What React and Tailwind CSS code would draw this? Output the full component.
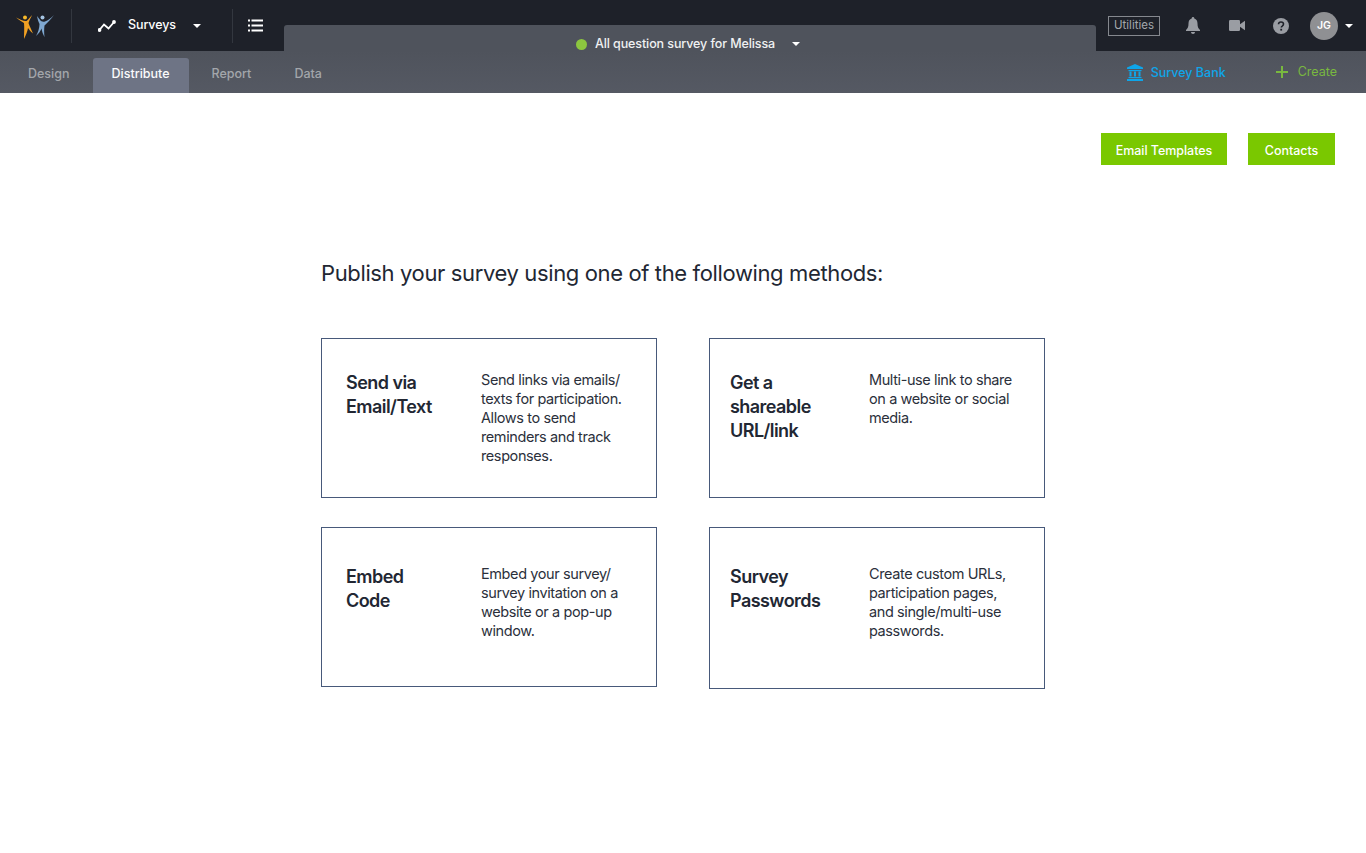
import React from 'react';

const FONT = 'font-["Inter",sans-serif]';

const METHODS = [
  { title: ['Send via', 'Email/Text'], text: ['Send links via emails/', 'texts for participation.', 'Allows to send', 'reminders and track', 'responses.'], pad: 'pl-6', descLeft: 'w-[135px]', h: 'h-40', titleTop: 'pt-[32px]', top: 'pt-[31px]' },
  { title: ['Get a', 'shareable', 'URL/link'], text: ['Multi-use link to share', 'on a website or social', 'media.'], pad: 'pl-5', descLeft: 'w-[139px]', h: 'h-40', titleTop: 'pt-[32px]', top: 'pt-[31px]' },
  { title: ['Embed', 'Code'], text: ['Embed your survey/', 'survey invitation on a', 'website or a pop-up', 'window.'], pad: 'pl-6', descLeft: 'w-[135px]', h: 'h-40', titleTop: 'pt-[37px]', top: 'pt-[36px]' },
  { title: ['Survey', 'Passwords'], text: ['Create custom URLs,', 'participation pages,', 'and single/multi-use', 'passwords.'], pad: 'pl-5', descLeft: 'w-[139px]', h: 'h-[162px]', titleTop: 'pt-[37px]', top: 'pt-[36px]' },
];

function Caret({ className = '' }) {
  return (
    <svg width="8" height="4" viewBox="0 0 8 4" className={className}>
      <path d="M0 0h8L4 4z" fill="currentColor" />
    </svg>
  );
}

function Logo() {
  return (
    <svg width="41" height="29" viewBox="15 11 41 29" className="block">
      <circle cx="25" cy="17.500" r="2" fill="#f8b92a" />
      <path d="M16 17.500C19 20 22 22 24 23c.5 5 0 10 0 16 2-4 3.500-8 4-11 1.500 2 3 4 5 5.500-1.500-3.500-3.500-7.500-4.500-10.500 1-3 2.500-5.500 3.500-8-2 2.500-4 5-5.500 6-2.500.5-6.500-1.500-10.500-3.500z" fill="#f0a023" />
      <circle cx="42.500" cy="17.500" r="2" fill="#a5c4e2" />
      <path d="M54 15c-3 3-6 5.500-9 6.500-2 .5-4 0-4.500-1-1-1.500-2.500-3-3.500-4.500.5 3 1.500 6 2.500 8 0 4-1.500 8.500-3.500 12 2.500-2 4.500-5 5.500-7.500.5 3 1.500 6 3 8.500-.5-4-.5-8 0-11.500 3-2.500 6.500-6.500 9.500-10.500z" fill="#7ea7d0" />
    </svg>
  );
}

function TrendIcon() {
  return (
    <svg width="18" height="12" viewBox="0 0 18 12" fill="none" stroke="#fff" strokeWidth="1.8">
      <path d="M1 10.500 6 4.500l4.500 4L16.500 1.500" />
      <circle cx="1.500" cy="10" r="1" fill="#fff" />
      <circle cx="16" cy="2" r="1" fill="#fff" />
    </svg>
  );
}

function ListIcon() {
  return (
    <svg width="15" height="13" viewBox="0 0 15 13" fill="#fff">
      <rect x="0" y="0.500" width="2" height="2" />
      <rect x="3.500" y="0.500" width="11.500" height="2" />
      <rect x="0" y="5.500" width="2" height="2" />
      <rect x="3.500" y="5.500" width="11.500" height="2" />
      <rect x="0" y="10.500" width="2" height="2" />
      <rect x="3.500" y="10.500" width="11.500" height="2" />
    </svg>
  );
}

function BellIcon() {
  return (
    <svg width="14" height="17" viewBox="0 0 14 17" fill="#9a9da3">
      <path d="M7 0c.8 0 1.300.6 1.300 1.400C10.500 2 11.500 3.800 11.500 6.500c0 3.500.8 5 2.500 6.500v1H0v-1c1.700-1.500 2.500-3 2.500-6.500C2.500 3.800 3.500 2 5.700 1.400 5.700.6 6.200 0 7 0z" />
      <path d="M5 15h4c0 1.200-.9 2-2 2s-2-.8-2-2z" />
    </svg>
  );
}

function VideoIcon() {
  return (
    <svg width="16" height="11" viewBox="0 0 16 11" fill="#9a9da3">
      <rect x="0" y="0" width="11" height="11" rx="1.200" />
      <path d="M11 4.200 16 .8v9.400l-5-3.400z" />
    </svg>
  );
}

function HelpIcon() {
  return (
    <svg width="16" height="16" viewBox="0 0 16 16">
      <circle cx="8" cy="8" r="8" fill="#9a9da3" />
      <path d="M5.500 6.200C5.600 4.700 6.600 4 8 4c1.500 0 2.500.9 2.500 2.100 0 1-.6 1.500-1.300 2-.6.400-.9.700-.9 1.500" fill="none" stroke="#1e2129" strokeWidth="1.600" />
      <rect x="7.300" y="10.800" width="1.800" height="1.800" fill="#1e2129" />
    </svg>
  );
}

function BankIcon() {
  return (
    <svg width="16" height="17" viewBox="0 0 16 17" fill="#0ea5e9">
      <path d="M8 0 16 3.500V5H0V3.500z" />
      <rect x="1.500" y="6" width="13" height="1.200" />
      <rect x="2.500" y="7.500" width="2" height="5" />
      <rect x="7" y="7.500" width="2" height="5" />
      <rect x="11.500" y="7.500" width="2" height="5" />
      <rect x="1.500" y="13" width="13" height="1.200" />
      <rect x="0" y="15" width="16" height="2" />
    </svg>
  );
}

function PlusIcon() {
  return (
    <svg width="12" height="12" viewBox="0 0 12 12" fill="#79b83f">
      <rect x="5" y="0" width="2" height="12" />
      <rect x="0" y="5" width="12" height="2" />
    </svg>
  );
}

function TopBar() {
  return (
    <div className="flex h-[51px] bg-[#1e2129]">
      <div className="flex w-[284px] shrink-0 items-center">
        <div className="ml-[15px] w-[56px] shrink-0"><Logo /></div>
        <div className="h-[34px] w-px bg-[#33373f]" />
        <div className="ml-[26px] flex w-[134px] items-center text-white">
          <TrendIcon />
          <span className="ml-[12px] text-[12.500px] font-medium tracking-[-0.1px]">Surveys</span>
          <Caret className="ml-[17px] text-white" />
        </div>
        <div className="h-[34px] w-px bg-[#33373f]" />
        <div className="ml-[15px]"><ListIcon /></div>
      </div>
      <div className="mt-[25px] flex flex-1 justify-center rounded-t-[3px] bg-[#4f535c] pr-[4px] pt-[12px]">
        <div className="flex h-[14px] items-center">
          <span className="h-[11px] w-[11px] rounded-full bg-[#8cc63f]" />
          <span className="ml-2 text-[12.500px] font-medium tracking-[-0.1px] text-[#f0f1f2]">All question survey for Melissa</span>
          <Caret className="ml-[17px] text-white" />
        </div>
      </div>
      <div className="flex w-[270px] shrink-0 items-center pl-3">
        <span className="flex h-[20px] w-[52px] items-center justify-center border border-[#85888e] text-[11.500px] text-[#a4a7ac]">Utilities</span>
        <div className="ml-[26px]"><BellIcon /></div>
        <div className="ml-[29px]"><VideoIcon /></div>
        <div className="ml-[28px]"><HelpIcon /></div>
        <span className="ml-[21px] flex h-[28px] w-[28px] items-center justify-center rounded-full bg-[#8f9093] text-[10.500px] font-semibold text-white">JG</span>
        <Caret className="ml-[7px] text-white" />
      </div>
    </div>
  );
}

function TabBar() {
  return (
    <div className="flex h-[42px] items-end bg-gradient-to-b from-[#4f535c] to-[#555963]">
      <div className="flex w-[350px] pl-[28px] text-[12.500px] font-medium">
        <span className="flex h-[35px] items-center pb-[2px] text-[#a3a6ab]">Design</span>
        <span className="ml-[23px] flex h-[35px] w-[96px] items-center justify-center rounded-t-[3px] bg-[#6e7485] pb-[2px] text-[#fbfbfc]">Distribute</span>
        <span className="ml-[23px] flex h-[35px] items-center pb-[2px] text-[#a3a6ab]">Report</span>
        <span className="ml-[43px] flex h-[35px] items-center pb-[2px] text-[#a3a6ab]">Data</span>
      </div>
      <div className="ml-auto flex h-[42px] items-center pr-[29px] text-[12.500px]">
        <BankIcon />
        <span className="ml-2 pt-[2px] font-medium text-[#0ea5e9]">Survey Bank</span>
        <span className="ml-[50px]"><PlusIcon /></span>
        <span className="ml-[10px] text-[#79b83f]">Create</span>
      </div>
    </div>
  );
}

function MethodCard({ title, text, pad, descLeft, h, titleTop, top }) {
  return (
    <div className={`flex w-[336px] border border-[#47597a] ${h} ${pad}`}>
      <div className={`${descLeft} ${titleTop} text-[18px] font-semibold leading-6 tracking-[-0.55px] text-[#222733]`}>
        {title.map(line => <div key={line}>{line}</div>)}
      </div>
      <div className={`${top} text-[14.500px] leading-[19px] tracking-[-0.4px] text-[#2b303b]`}>
        {text.map(line => <div key={line} className="whitespace-nowrap">{line}</div>)}
      </div>
    </div>
  );
}

export default function App() {
  return (
    <div className={`min-h-[853px] bg-white ${FONT}`}>
      <TopBar />
      <TabBar />
      <div className="flex justify-end gap-[21px] pr-[31px] pt-10">
        <button className="h-8 w-[126px] bg-[#7ac800] pt-[5px] text-[12.500px] font-medium tracking-[-0.05px] text-white">Email Templates</button>
        <button className="h-8 w-[87px] bg-[#7ac800] pt-[5px] text-[12.500px] font-medium tracking-[-0.05px] text-white">Contacts</button>
      </div>
      <div className="ml-[321px] pt-[94px]">
        <h1 className="text-[22px] leading-7 tracking-[-0.37px] text-[#222733]">Publish your survey using one of the following methods:</h1>
        <div className="mt-[51px] grid w-[724px] grid-cols-[336px_336px] items-start gap-x-[52px] gap-y-[29px]">
          {METHODS.map(m => <MethodCard key={m.title.join(' ')} {...m} />)}
        </div>
      </div>
    </div>
  );
}
